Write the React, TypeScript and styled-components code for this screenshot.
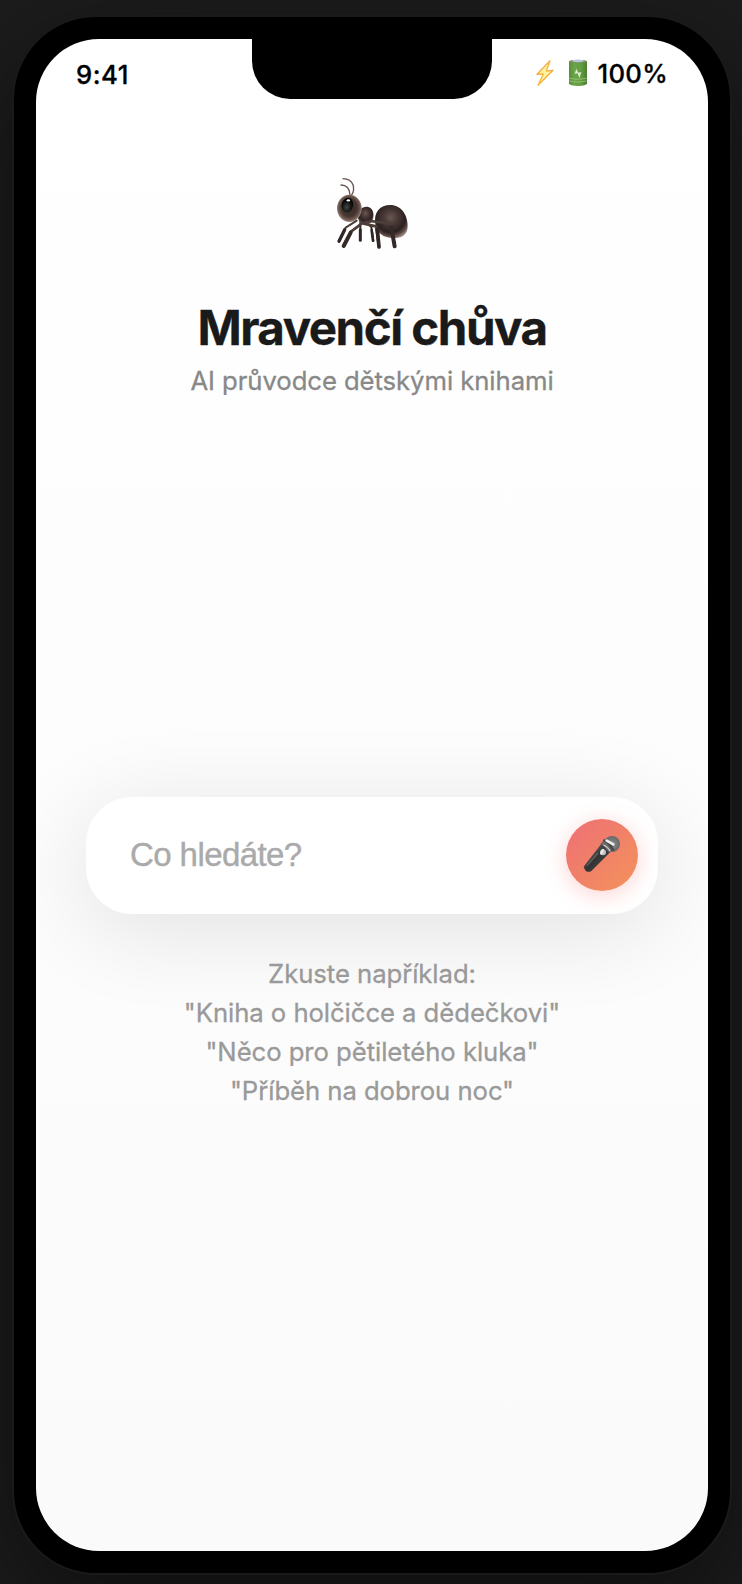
import React from 'react';
import styled, { createGlobalStyle } from 'styled-components';

const sans = `Inter, "Liberation Sans", sans-serif`;

const GlobalStyle = createGlobalStyle`
  * { box-sizing: border-box; }
  html, body { margin: 0; padding: 0; }
  body {
    background: #1c1c1c;
    font-family: ${sans};
    overflow: hidden;
    -webkit-font-smoothing: antialiased;
  }
`;

const Stage = styled.main`
  height: 1584px;
  padding: 17px 12px 11px 14px;
  overflow: hidden;
`;

const Phone = styled.div`
  width: 716px;
  height: 1556px;
  padding: 22px;
  border-radius: 82px;
  background: #000;
  box-shadow: 0 0 0 2px #1a1a1a, 0 37px 110px rgba(0, 0, 0, 0.5);
`;

const Screen = styled.div`
  position: relative;
  display: flex;
  flex-direction: column;
  height: 100%;
  border-radius: 63px;
  overflow: hidden;
  background: linear-gradient(180deg, #ffffff 0%, #fafafa 100%);
`;

const Notch = styled.div`
  position: absolute;
  top: 0;
  left: 50%;
  width: 240px;
  height: 60px;
  transform: translateX(-50%);
  border-radius: 0 0 38px 38px;
  background: #000;
`;

const StatusBar = styled.div`
  display: flex;
  justify-content: space-between;
  align-items: center;
  height: 68px;
  padding: 0 40px;
  font-size: 25.7px;
  font-weight: 500;
  line-height: 31px;
  color: #000;
  -webkit-text-stroke: 0.3px currentColor;
`;

const Clock = styled.span`
  padding-top: 2px;
  letter-spacing: 0.5px;
`;

const Power = styled.div`
  display: flex;
  align-items: center;
  letter-spacing: 0.3px;
`;

const BoltIcon = styled.svg`
  width: 18px;
  height: 28px;
  margin-right: 14px;
`;

const BatteryIcon = styled.svg`
  width: 20px;
  height: 28px;
  margin-right: 9px;
`;

const Header = styled.header`
  display: flex;
  flex-direction: column;
  align-items: center;
  padding-top: 58px;
`;

const AntIcon = styled.svg`
  width: 100px;
  height: 95px;
  margin-right: 4px;
`;

const Title = styled.h1`
  margin: 39px 0 0;
  font-size: 47.5px;
  font-weight: 700;
  line-height: 58px;
  letter-spacing: -1.48px;
  color: #1a1a1a;
  -webkit-text-stroke: 0.3px currentColor;
`;

const Subtitle = styled.p`
  margin: 8px 0 0;
  font-size: 25.7px;
  line-height: 31px;
  letter-spacing: -0.07px;
  color: #888;
  -webkit-text-stroke: 0.3px currentColor;
`;

const SearchBox = styled.div`
  display: flex;
  align-items: center;
  justify-content: space-between;
  flex: none;
  height: 117px;
  margin: 401px 50px 0;
  padding: 0 20px 1px 44px;
  border-radius: 46px;
  background: #fff;
  box-shadow: 0 15px 92px rgba(0, 0, 0, 0.11);
`;

const Placeholder = styled.span`
  padding-bottom: 1px;
  font-family: "Liberation Sans", Arial, sans-serif;
  font-size: 33px;
  line-height: 38px;
  letter-spacing: -0.58px;
  color: #aaa;
  -webkit-text-stroke: 0.4px currentColor;
`;

const MicButton = styled.button`
  width: 72px;
  height: 72px;
  padding: 0;
  border: 0;
  border-radius: 50%;
  background: linear-gradient(135deg, #ee6f76 0%, #f3935a 100%);
  box-shadow: 0 4px 22px rgba(255, 107, 107, 0.3);
`;

const MicIcon = styled.svg`
  display: block;
  width: 72px;
  height: 72px;
`;

const Hints = styled.div`
  margin-top: 40px;
  text-align: center;
  font-size: 25.7px;
  line-height: 39px;
  letter-spacing: -0.06px;
  color: #999;
  -webkit-text-stroke: 0.3px currentColor;
`;

function Bolt() {
  return (
    <BoltIcon viewBox="0 0 54 84">
      <defs>
        <linearGradient id="bolt" x1="0" y1="0" x2="1" y2="1">
          <stop offset="0" stopColor="#efa04a" />
          <stop offset="0.5" stopColor="#f5b840" />
          <stop offset="1" stopColor="#ec9448" />
        </linearGradient>
      </defs>
      <path d="M42 5 L3 46 L22 45 L6 79 L51 34 L31 36 Z" fill="#fff3a0" stroke="url(#bolt)" strokeWidth="4" strokeLinejoin="round" />
    </BoltIcon>
  );
}

function Battery() {
  return (
    <BatteryIcon viewBox="0 0 60 84">
      <defs>
        <linearGradient id="cell" x1="0" x2="1">
          <stop offset="0" stopColor="#5a8d3c" />
          <stop offset="0.3" stopColor="#6aa548" />
          <stop offset="0.65" stopColor="#639f40" />
          <stop offset="1" stopColor="#4b7f30" />
        </linearGradient>
      </defs>
      <path d="M3 7 V73 Q5 81 30 81 Q55 81 57 73 V7 Z" fill="url(#cell)" />
      <ellipse cx="30" cy="7" rx="27" ry="5" fill="#78915f" />
      <ellipse cx="30" cy="6" rx="17" ry="3.5" fill="#b9c7dc" />
      <path d="M25 29 L20 45 L29 43 L34 58 L40 39 L31 41 Z" fill="#dcebd0" />
      <path d="M4 58 Q30 64 56 58 M4 66 Q30 72 56 66" fill="none" stroke="#a9cb91" strokeWidth="2" />
    </BatteryIcon>
  );
}

function Ant() {
  return (
    <AntIcon viewBox="0 0 300 285">
      <defs>
        <radialGradient id="abdomen" cx="0.48" cy="0.38" r="0.66">
          <stop offset="0" stopColor="#6b5853" />
          <stop offset="0.3" stopColor="#4b3b38" />
          <stop offset="0.68" stopColor="#2b2120" />
          <stop offset="0.85" stopColor="#5c4a45" />
          <stop offset="1" stopColor="#a99389" />
        </radialGradient>
        <radialGradient id="head" cx="0.5" cy="0.48" r="0.53">
          <stop offset="0" stopColor="#332826" />
          <stop offset="0.6" stopColor="#45362f" />
          <stop offset="0.82" stopColor="#6b5750" />
          <stop offset="1" stopColor="#ad978d" />
        </radialGradient>
        <radialGradient id="eye" cx="0.5" cy="0.65" r="0.5">
          <stop offset="0" stopColor="#424646" />
          <stop offset="1" stopColor="#050505" />
        </radialGradient>
      </defs>
      <g fill="none" stroke="#66544e" strokeWidth="4" strokeLinecap="round">
        <path d="M95 90 C106 72 103 42 69 41" />
        <path d="M90 90 C89 72 82 60 63 60" />
      </g>
      <g fill="none" stroke="#302624" strokeLinecap="round" strokeLinejoin="round">
        <path d="M121 166 V194" strokeWidth="6" />
        <path d="M121 194 V226" strokeWidth="9" />
        <path d="M139 172 L154 186 L160 228" strokeWidth="6" />
        <path d="M155 196 L159 227" strokeWidth="8" />
      </g>
      <path d="M166 178 C160 141 181 120 211 120 C242 120 263 148 263 182 C263 212 243 220 219 219 C190 219 170 204 166 178 Z" fill="url(#abdomen)" />
      <path d="M114 160 C113 132 129 123 145 126 C161 130 163 150 158 166 C151 184 119 181 114 160 Z" fill="url(#abdomen)" />
      <ellipse cx="88" cy="130" rx="37" ry="41" fill="url(#head)" />
      <ellipse cx="82" cy="120" rx="17" ry="22" fill="url(#eye)" transform="rotate(15 82 120)" />
      <ellipse cx="85" cy="106" rx="5" ry="3.5" fill="#fff" />
      <g fill="none" stroke="#4d3e3a" strokeLinecap="round" strokeLinejoin="round">
        <path d="M110 167 L77 188 L57 229" strokeWidth="6" />
        <path d="M74 194 L57 229" strokeWidth="10" stroke="#302725" />
        <path d="M125 176 L93 200 L71 243" strokeWidth="8" />
        <path d="M92 203 L71 243" strokeWidth="12" stroke="#342a28" />
        <path d="M131 176 L168 184 L177 246" strokeWidth="8" />
        <path d="M172 193 L177 246" strokeWidth="11" stroke="#302624" />
        <path d="M130 175 Q145 166 168 170 L212 176 L224 244" strokeWidth="8" />
        <path d="M214 187 L224 244" strokeWidth="12" stroke="#342a28" />
      </g>
    </AntIcon>
  );
}

function Microphone() {
  return (
    <MicIcon viewBox="78 117 216 216">
      <defs>
        <linearGradient id="handle" x1="0" y1="0" x2="1" y2="1">
          <stop offset="0.2" stopColor="#666" />
          <stop offset="0.5" stopColor="#333" />
          <stop offset="0.8" stopColor="#484848" />
        </linearGradient>
        <radialGradient id="grille">
          <stop offset="0" stopColor="#929292" />
          <stop offset="1" stopColor="#666" />
        </radialGradient>
      </defs>
      <path d="M132 259 L184 191 Q196 193 211 216 L155 272 Q146 279 137 272 Q130 266 132 259 Z" fill="url(#handle)" />
      <ellipse cx="216" cy="192" rx="24" ry="24" fill="url(#grille)" />
      <path d="M189 184 Q205 188 217 209 L207 218 Q197 195 181 193 Z" fill="#6b6b6b" />
      <path d="M191 177 Q209 179 224 211 L216 214 Q205 188 188 184 Z" fill="#4a4a4a" />
      <path d="M190 195 Q203 200 210 213" fill="none" stroke="#ccc" strokeWidth="4" />
      <path d="M200 182 L220 193" stroke="#eee" strokeWidth="8" strokeLinecap="round" />
      <path d="M206 175 L232 190 M215 171 L235 182" stroke="#777" strokeWidth="2" />
      <circle cx="189" cy="217" r="9" fill="#c5c5c5" />
      <path d="M182 223 L190 207" stroke="#f3f3f3" strokeWidth="5" />
      <path d="M141 257 L174 219" stroke="#606060" strokeWidth="4" />
    </MicIcon>
  );
}

export default function App() {
  return (
    <>
      <GlobalStyle />
      <Stage>
        <Phone>
          <Screen>
            <Notch />
            <StatusBar>
              <Clock>9:41</Clock>
              <Power><Bolt /><Battery /><span>100%</span></Power>
            </StatusBar>
            <Header>
              <Ant />
              <Title>Mravenčí chůva</Title>
              <Subtitle>AI průvodce dětskými knihami</Subtitle>
            </Header>
            <SearchBox>
              <Placeholder>Co hledáte?</Placeholder>
              <MicButton aria-label="Hlasové vyhledávání"><Microphone /></MicButton>
            </SearchBox>
            <Hints>
              Zkuste například:<br />
              "Kniha o holčičce a dědečkovi"<br />
              "Něco pro pětiletého kluka"<br />
              "Příběh na dobrou noc"
            </Hints>
          </Screen>
        </Phone>
      </Stage>
    </>
  );
}
